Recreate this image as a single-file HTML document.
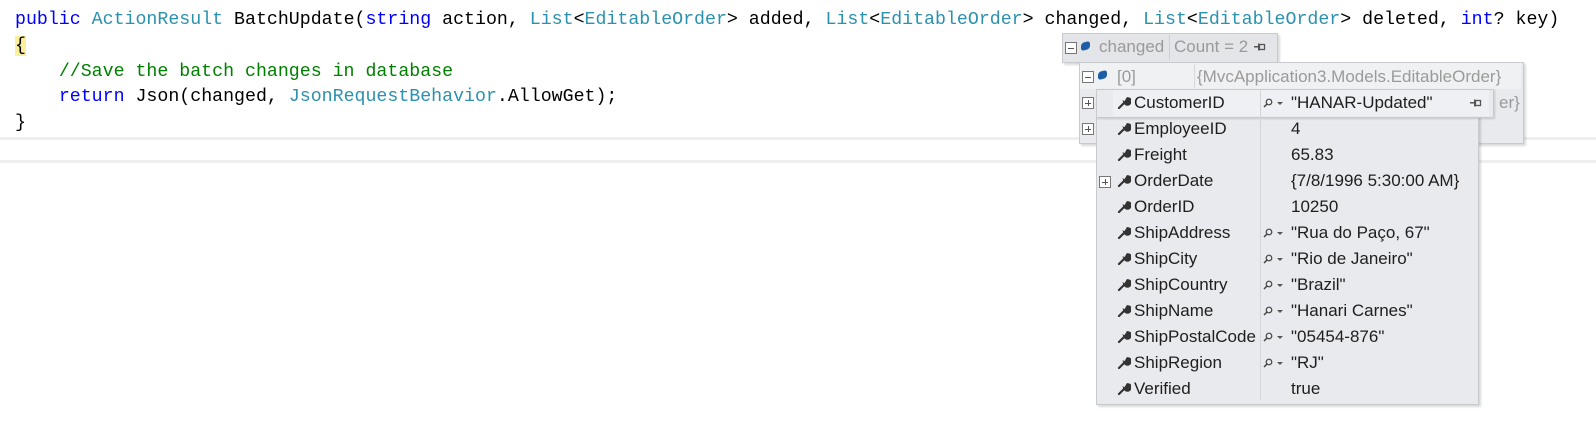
<!DOCTYPE html>
<html><head><meta charset="utf-8"><style>
body{margin:0;width:1596px;height:428px;background:#fff;position:relative;overflow:hidden;font-family:"Liberation Sans",sans-serif}
.code{position:absolute;left:15px;top:8px;font-family:"Liberation Mono",monospace;font-size:18.25px;line-height:25.8px;white-space:pre;color:#000}
.k{color:#0000ff}.t{color:#2b91af}.c{color:#008000}
.hl{background:#fbf09a}
.hr{position:absolute;left:0;width:1596px;height:3px;background:#eeeeee}
.box{position:absolute;background:#e9eaed;border:1px solid #c9cacd;box-shadow:2px 2px 2px rgba(0,0,0,.15)}
.a{position:absolute;white-space:nowrap;font-size:17px;line-height:26px}
.g{color:#9a9a9a}
.pm{position:absolute;width:10px;height:10px;border:1px solid #777;background:#fff}
.pm:before{content:"";position:absolute;left:2px;top:4.5px;width:6px;height:1px;background:#555}
.pm.p:after{content:"";position:absolute;left:4.5px;top:2px;width:1px;height:6px;background:#555}
.cube{position:absolute;width:9px;height:8px;background:#1c5fa8;border-radius:3px;transform:skewY(-15deg)}
.w{position:absolute;width:14px;height:14px}
.pin{position:absolute;width:12px;height:8px}
</style></head><body>
<div class="code"><span class="k">public</span> <span class="t">ActionResult</span> BatchUpdate(<span class="k">string</span> action, <span class="t">List</span>&lt;<span class="t">EditableOrder</span>&gt; added, <span class="t">List</span>&lt;<span class="t">EditableOrder</span>&gt; changed, <span class="t">List</span>&lt;<span class="t">EditableOrder</span>&gt; deleted, <span class="k">int</span>? key)
<span class="hl">{</span>
    <span class="c">//Save the batch changes in database</span>
    <span class="k">return</span> Json(changed, <span class="t">JsonRequestBehavior</span>.AllowGet);
}</div>
<div class="hr" style="top:137px"></div>
<div class="hr" style="top:160px"></div>

<div class="box" style="left:1062px;top:33px;width:214px;height:28px;background:#e4e5e8"></div>
<div class="pm" style="left:1065px;top:42px"></div>
<div class="cube" style="left:1081px;top:42px"></div>
<div class="a g" style="left:1099px;top:34px">changed</div>
<div style="position:absolute;left:1169px;top:35px;width:1px;height:25px;background:#d0d0d0"></div>
<div class="a g" style="left:1174px;top:34px">Count = 2</div>
<svg class="pin" style="left:1254px;top:43px" viewBox="0 0 12 8"><rect x="0" y="3" width="4" height="1.5" fill="#555"/><rect x="4" y="0.5" width="1.5" height="7" fill="#555"/><rect x="5.5" y="1.5" width="5" height="5" fill="none" stroke="#555" stroke-width="1.3"/></svg>

<div class="box" style="left:1079px;top:62px;width:443px;height:80px"></div>
<div style="position:absolute;left:1080px;top:63px;width:441px;height:26px;background:#f0f1f3"></div>
<div class="pm" style="left:1082px;top:71px"></div>
<div class="cube" style="left:1098px;top:71px"></div>
<div class="a g" style="left:1117px;top:64px">[0]</div>
<div style="position:absolute;left:1194px;top:64px;width:1px;height:24px;background:#d8d8d8"></div>
<div class="a g" style="left:1197px;top:64px">{MvcApplication3.Models.EditableOrder}</div>
<div class="pm p" style="left:1082px;top:97px"></div>
<div class="pm p" style="left:1082px;top:123px"></div>
<div class="a g" style="left:1499px;top:90px">er}</div>

<div class="box" style="left:1096px;top:89px;width:381px;height:314px"></div>
<div class="box" style="left:1096px;top:89px;width:396px;height:27px;box-shadow:1px 1px 2px rgba(0,0,0,.15)"></div>
<div style="position:absolute;left:1113px;top:90px;width:376px;height:26px;background:#eff0f3"></div>
<div style="position:absolute;left:1260px;top:90px;width:1px;height:310px;background:#d4d5d8"></div>
<svg class="pin" style="left:1470px;top:99px" viewBox="0 0 12 8"><rect x="0" y="3" width="4" height="1.5" fill="#555"/><rect x="4" y="0.5" width="1.5" height="7" fill="#555"/><rect x="5.5" y="1.5" width="5" height="5" fill="none" stroke="#555" stroke-width="1.3"/></svg>

<div id="rows"></div>
<script>
var rows=[["CustomerID","\"HANAR-Updated\"",1],["EmployeeID","4",0],["Freight","65.83",0],["OrderDate","{7/8/1996 5:30:00 AM}",0,1],["OrderID","10250",0],["ShipAddress","\"Rua do Paço, 67\"",1],["ShipCity","\"Rio de Janeiro\"",1],["ShipCountry","\"Brazil\"",1],["ShipName","\"Hanari Carnes\"",1],["ShipPostalCode","\"05454-876\"",1],["ShipRegion","\"RJ\"",1],["Verified","true",0]];
var h="";
rows.forEach(function(r,i){var t=90+26*i;
h+='<svg class="w" style="left:1117px;top:'+(t+6)+'px" viewBox="0 0 14 14"><path d="M2 12 L8 6 M7.5 6.5 A3.2 3.2 0 1 0 10.5 2.2 L9 4.8 L10.2 6 L12.2 4.5 A3.2 3.2 0 0 1 7.5 6.5Z" stroke="#333" stroke-width="2.2" fill="#333" stroke-linecap="round"/></svg>';
h+='<div class="a" style="left:1134px;top:'+t+'px;color:#1e1e1e">'+r[0]+'</div>';
if(r[2])h+='<svg style="position:absolute;left:1263px;top:'+(t+8)+'px" width="10" height="10" viewBox="0 0 10 10"><circle cx="6" cy="4" r="2.8" fill="none" stroke="#444" stroke-width="1.2"/><path d="M4 6 L1 9" stroke="#444" stroke-width="1.5"/></svg><div style="position:absolute;left:1277px;top:'+(t+12)+'px;width:0;height:0;border-left:3px solid transparent;border-right:3px solid transparent;border-top:3px solid #555"></div>';
h+='<div class="a" style="left:1291px;top:'+t+'px;color:#1e1e1e">'+r[1]+'</div>';
if(r[3])h+='<div class="pm p" style="left:1099px;top:'+(t+8)+'px"></div>';
});
document.getElementById("rows").innerHTML=h;
</script>
</body></html>
